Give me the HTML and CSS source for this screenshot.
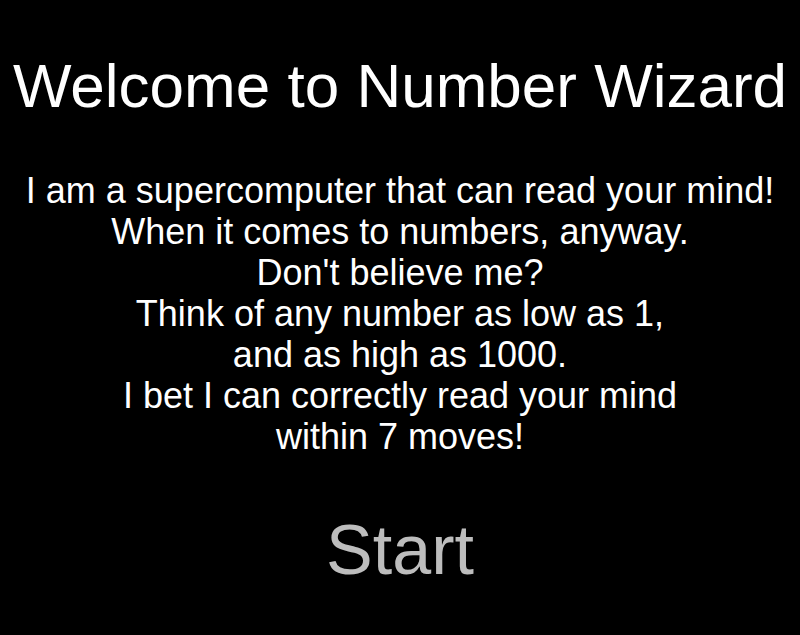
FILE: index.html
```html
<!DOCTYPE html>
<html>
<head>
<meta charset="utf-8">
<link rel="stylesheet" href="styles.css">
</head>
<body>
<main class="screen">
  <h1 class="title">Welcome to Number Wizard</h1>
  <p class="intro">I am a supercomputer that can read your mind!<br>When it comes to numbers, anyway.<br>Don't believe me?<br>Think of any number as low as 1,<br>and as high as 1000.<br>I bet I can correctly read your mind<br>within 7 moves!</p>
  <button class="start">Start</button>
</main>
</body>
</html>
```
FILE: styles.css
```css
html, body {
  margin: 0;
  padding: 0;
  background: #000;
}
.screen {
  width: 800px;
  height: 635px;
  display: flex;
  flex-direction: column;
  align-items: center;
  font-family: "Liberation Sans", Arial, sans-serif;
  color: #fff;
  overflow: hidden;
}
.title {
  margin: 50px 0 0;
  font-size: 62px;
  font-weight: normal;
  line-height: 71px;
  white-space: nowrap;
}
.intro {
  margin: 49px 0 0;
  font-size: 36px;
  line-height: 41px;
  text-align: center;
}
.start {
  margin: 53px 0 0;
  padding: 0;
  border: none;
  background: none;
  font-family: inherit;
  font-size: 70px;
  line-height: 80px;
  color: #bdbdbd;
}
```
